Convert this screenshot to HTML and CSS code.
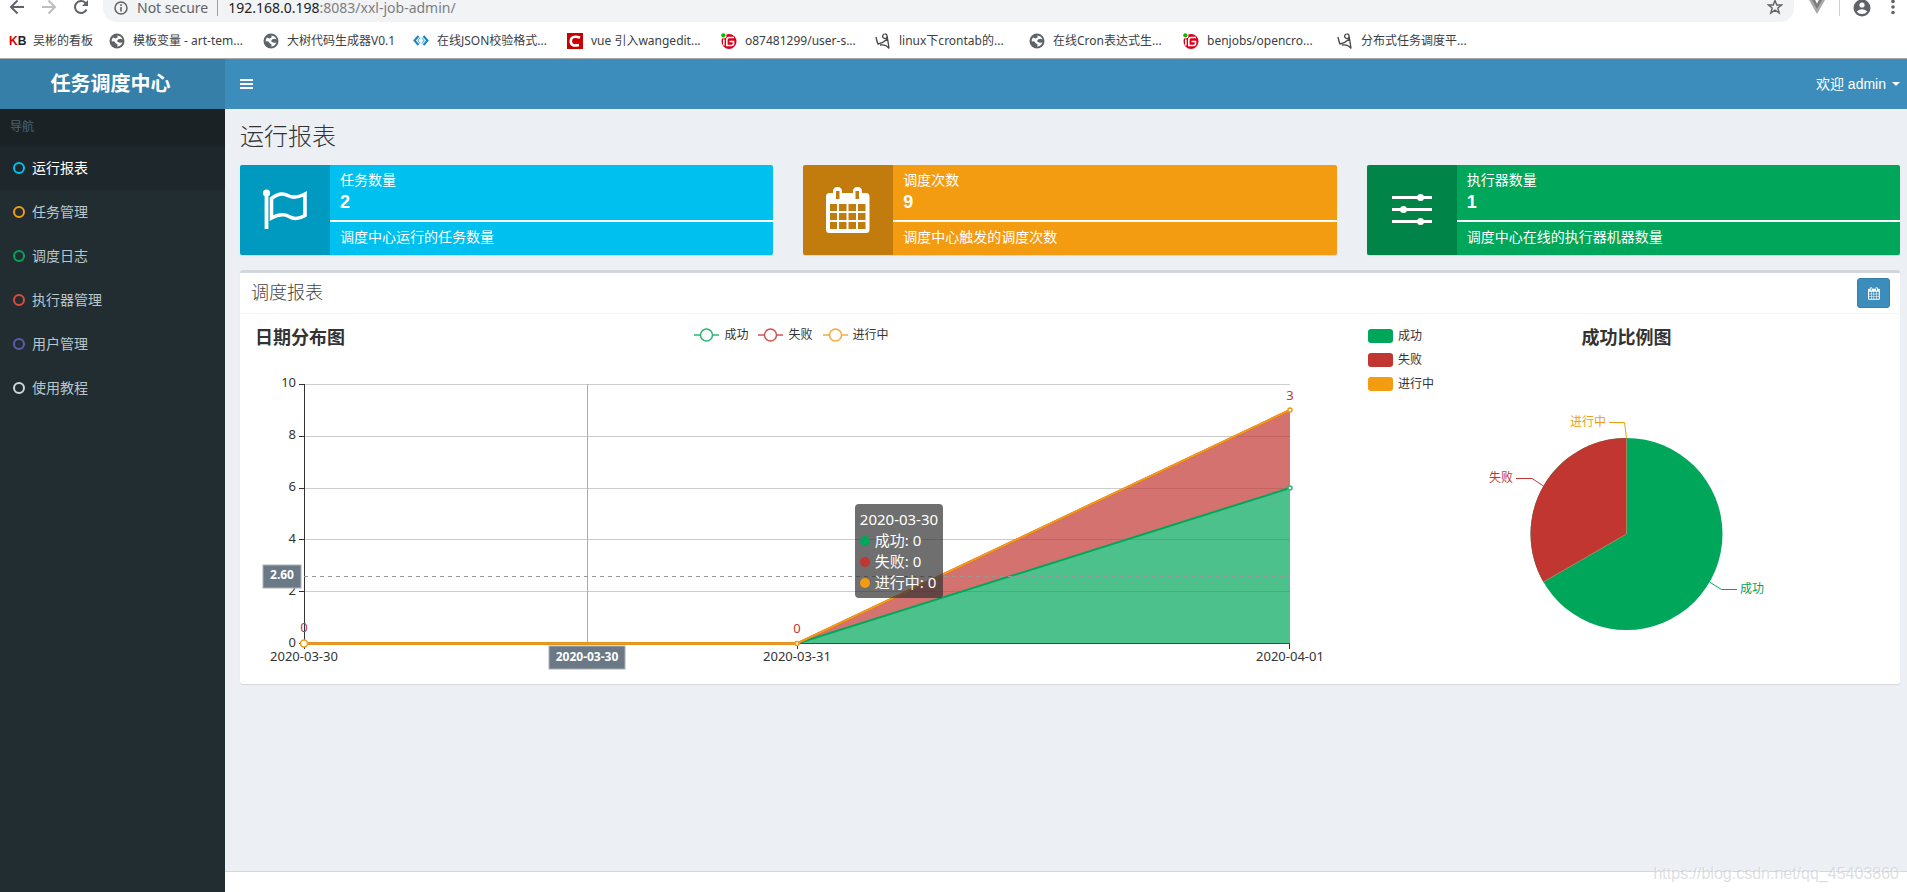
FILE: index.html
```html
<!DOCTYPE html>
<html lang="zh-CN">
<head>
<meta charset="utf-8">
<title>任务调度中心</title>
<link rel="stylesheet" href="styles.css">
</head>
<body class="page">
<svg class="defs" width="0" height="0" aria-hidden="true">
  <symbol id="globe" viewBox="0 0 16 16">
    <circle cx="8" cy="8" r="7.500" fill="#5f6368"/>
    <path d="M8.500 2.500Q12.500 3 13.500 6.500L11.500 5.800 9 6.500 8 8.200 10 9.500H13.300Q12 13.500 8 13.600L8.800 11.800 6.500 10 5.500 8.500 2.600 8.200Q2.500 6 4 4.500L6.500 5.500 8.500 4.500Z" fill="#fff"/>
    <path d="M9 7.500 12 7 13.500 8.500 12 9.500 10 9Z" fill="#5f6368"/>
  </symbol>
  <symbol id="gitee" viewBox="0 0 16 16">
    <circle cx="8" cy="8.500" r="7.500" fill="#d9001b"/>
    <circle cx="2.500" cy="2.500" r="3" fill="#fff"/>
    <circle cx="2.300" cy="2.300" r="2.100" fill="#0ab80a"/>
    <path d="M13 4.500H8Q5.800 4.500 5.800 7V12.500H10.500Q12.500 12.500 12.500 10.500V8.500H8.500M2.800 6.500V12.500" fill="none" stroke="#fff" stroke-width="1.600"/>
  </symbol>
  <symbol id="quill" viewBox="0 0 16 16">
    <path d="M1 4Q2 9 3 11Q8 10 12.500 6M9 1Q6.500 3 8.500 5Q11 6.500 12 4Q12.500 1 9.500 .800M12 2.500Q13 8 14 15.500Q11 11 5 12" fill="none" stroke="#444" stroke-width="1.300"/>
  </symbol>
  <symbol id="calendar" viewBox="0 0 44 46">
    <path fill-rule="evenodd" d="M3.500 6H7V4.500Q7 0 11.500 0T16 4.500V6H27V4.500Q27 0 31.500 0T36 4.500V6H40Q43.500 6 43.500 9.500V42.500Q43.500 46 40 46H3.500Q0 46 0 42.500V9.500Q0 6 3.500 6ZM10 4V12H13.500V4ZM29.500 4V12H33V4ZM4 17V24H11V17ZM13 17V24H20.500V17ZM22.500 17V24H30V17ZM32 17V24H39.500V17ZM4 26V33H11V26ZM13 26V33H20.500V26ZM22.500 26V33H30V26ZM32 26V33H39.500V26ZM4 35V42H11V35ZM13 35V42H20.500V35ZM22.500 35V42H30V35ZM32 35V42H39.500V35Z" fill="#fff"/>
  </symbol>
</svg>

<div class="toolbar">
  <button class="tool" aria-label="后退"><svg width="16" height="16" viewBox="0 0 16 16" fill="none" stroke="#5f6368" stroke-width="2"><path d="M15 8H2M8.500 1.500 2 8l6.500 6.500"/></svg></button>
  <button class="tool" aria-label="前进"><svg width="16" height="16" viewBox="0 0 16 16" fill="none" stroke="#bcbec1" stroke-width="2"><path d="M1 8H14M7.500 1.500 14 8l-6.500 6.500"/></svg></button>
  <button class="tool" aria-label="刷新"><svg width="16" height="16" viewBox="0 0 16 16"><path d="M13.500 10.500A6 6 0 1 1 12.300 3.800L14 5.500" fill="none" stroke="#5f6368" stroke-width="2"/><path d="M15 1V7H9Z" fill="#5f6368"/></svg></button>
  <div class="address">
    <svg width="14" height="14" viewBox="0 0 14 14"><circle cx="7" cy="7" r="6" fill="none" stroke="#5f6368" stroke-width="1.500"/><path d="M7 6V10.500M7 3.300V5" stroke="#5f6368" stroke-width="1.600"/></svg>
    <span class="address-note">Not secure</span>
    <span class="address-url"><b class="address-host">192.168.0.198</b>:8083/xxl-job-admin/</span>
    <button class="tool" aria-label="收藏"><svg width="16" height="16" viewBox="0 0 16 16"><path d="M8 1.500 9.800 6H14.500L10.800 9 12.200 14 8 11.200 3.800 14 5.200 9 1.500 6H6.200Z" fill="none" stroke="#5f6368" stroke-width="1.400"/></svg></button>
  </div>
  <div class="tools-right">
    <button class="tool" aria-label="扩展"><svg width="16" height="16" viewBox="0 0 16 16"><path d="M0 1H6L8 5 10 1H16L8 15Z" fill="#a8a8a8"/><path d="M3 1H6L8 5 10 1H13L8 10Z" fill="#7c7c7c"/></svg></button>
    <span class="tools-split"></span>
    <button class="tool" aria-label="用户"><svg width="18" height="18" viewBox="0 0 18 18"><circle cx="9" cy="9" r="8.500" fill="#5f6368"/><circle cx="9" cy="6" r="2.600" fill="#fff"/><path d="M3.800 12.500Q9 8 14.200 12.500 12.500 15 9 15T3.800 12.500Z" fill="#fff"/></svg></button>
    <button class="tool" aria-label="菜单"><svg width="16" height="16" viewBox="0 0 16 16" fill="#5f6368"><circle cx="8" cy="2.500" r="1.800"/><circle cx="8" cy="8" r="1.800"/><circle cx="8" cy="13.500" r="1.800"/></svg></button>
  </div>
</div>

<nav class="bookmarks">
  <a class="bookmark bookmark--short" href="#"><span class="kb"><b class="kb-k">K</b>B</span>吴彬的看板</a>
  <a class="bookmark" href="#"><svg width="16" height="16"><use href="#globe"/></svg>模板变量 - art-tem...</a>
  <a class="bookmark bookmark--medium" href="#"><svg width="16" height="16"><use href="#globe"/></svg>大树代码生成器V0.1</a>
  <a class="bookmark" href="#"><svg width="16" height="16" viewBox="0 0 16 16" fill="none" stroke="#1583c4" stroke-width="2"><path d="M5.500 3 1.500 7.500 5.500 12M10.500 3 14.500 7.500 10.500 12"/><path d="M7.300 4.500 5 7.500 7.300 10.500M8.700 4.500 11 7.500 8.700 10.500" stroke="#58b4e6" stroke-width="1.200"/></svg>在线JSON校验格式...</a>
  <a class="bookmark" href="#"><svg width="16" height="16" viewBox="0 0 16 16"><path d="M0 0H16V16H0Z" fill="#c80000"/><path d="M13 4.500Q4 2 3.800 8T12 12" fill="none" stroke="#fff" stroke-width="2.600"/></svg>vue 引入wangedit...</a>
  <a class="bookmark" href="#"><svg width="16" height="16"><use href="#gitee"/></svg>o87481299/user-s...</a>
  <a class="bookmark" href="#"><svg width="16" height="16"><use href="#quill"/></svg>linux下crontab的...</a>
  <a class="bookmark" href="#"><svg width="16" height="16"><use href="#globe"/></svg>在线Cron表达式生...</a>
  <a class="bookmark" href="#"><svg width="16" height="16"><use href="#gitee"/></svg>benjobs/opencro...</a>
  <a class="bookmark" href="#"><svg width="16" height="16"><use href="#quill"/></svg>分布式任务调度平...</a>
</nav>

<header class="header">
  <a class="logo" href="#">任务调度中心</a>
  <div class="navbar">
    <button class="toggle" aria-label="切换导航"><svg width="14" height="10" viewBox="0 0 14 10"><path d="M0 1H13M0 5H13M0 9H13" stroke="#fff" stroke-width="2"/></svg></button>
    <button class="user">欢迎 admin<span class="caret"></span></button>
  </div>
</header>

<div class="shell">
  <aside class="sidebar">
    <div class="sidebar-title">导航</div>
    <a class="side-link side-link--active" href="#"><span class="ring ring--aqua"></span>运行报表</a>
    <a class="side-link" href="#"><span class="ring ring--yellow"></span>任务管理</a>
    <a class="side-link" href="#"><span class="ring ring--green"></span>调度日志</a>
    <a class="side-link" href="#"><span class="ring ring--red"></span>执行器管理</a>
    <a class="side-link" href="#"><span class="ring ring--purple"></span>用户管理</a>
    <a class="side-link" href="#"><span class="ring ring--gray"></span>使用教程</a>
  </aside>

  <div class="main">
    <main class="content">
      <h1 class="page-title">运行报表</h1>

      <section class="cards">
        <div class="card card--aqua">
          <div class="card-icon"><svg width="46" height="42" viewBox="0 0 46 42" fill="none" stroke="#fff" stroke-width="3.600"><circle cx="4.500" cy="4" r="3.600" fill="#fff" stroke="none"/><path d="M4.500 5V40" stroke-width="3.800"/><path d="M9.500 9.500C17 4 21 4 27 7Q33 10 43 5V26.500Q34 32 27 27.500Q20 23.500 9.500 29Z"/></svg></div>
          <div class="card-body"><div class="card-name">任务数量</div><div class="card-number">2</div><div class="card-line"></div><div class="card-note">调度中心运行的任务数量</div></div>
        </div>
        <div class="card card--yellow">
          <div class="card-icon"><svg width="44" height="46"><use href="#calendar"/></svg></div>
          <div class="card-body"><div class="card-name">调度次数</div><div class="card-number">9</div><div class="card-line"></div><div class="card-note">调度中心触发的调度次数</div></div>
        </div>
        <div class="card card--green">
          <div class="card-icon"><svg width="40" height="32" viewBox="0 0 40 32"><path d="M0 3.500H40M0 15.500H40M0 27.500H40" stroke="#fff" stroke-width="3"/><g fill="#fff"><circle cx="28.500" cy="3.500" r="3.500"/><circle cx="11.500" cy="15.500" r="3.500"/><circle cx="28.500" cy="27.500" r="3.500"/></g></svg></div>
          <div class="card-body"><div class="card-name">执行器数量</div><div class="card-number">1</div><div class="card-line"></div><div class="card-note">调度中心在线的执行器机器数量</div></div>
        </div>
      </section>

      <section class="box">
        <div class="box-header">
          <h2 class="box-title">调度报表</h2>
          <button class="date-button" aria-label="选择日期"><svg width="12" height="13"><use href="#calendar"/></svg></button>
        </div>
        <div class="box-body">
          <div class="line-chart">
            <div class="line-head">
              <h3 class="chart-title">日期分布图</h3>
              <div class="line-legend">
                <span class="legend-item legend-item--green"><svg width="25" height="14" viewBox="0 0 25 14"><path d="M0 7H25"/><circle cx="12.500" cy="7" r="6"/></svg>成功</span>
                <span class="legend-item legend-item--red"><svg width="25" height="14" viewBox="0 0 25 14"><path d="M0 7H25"/><circle cx="12.500" cy="7" r="6"/></svg>失败</span>
                <span class="legend-item legend-item--yellow"><svg width="25" height="14" viewBox="0 0 25 14"><path d="M0 7H25"/><circle cx="12.500" cy="7" r="6"/></svg>进行中</span>
              </div>
            </div>
            <svg class="plot" viewBox="0 0 1083 300">
              <path class="grid-line" d="M54 10.500H1040M54 62.500H1040M54 114.500H1040M54 165.500H1040M54 217.500H1040"/>
              <path class="axis" d="M54.500 10V275M49 10.500H54M49 62.500H54M49 114.500H54M49 165.500H54M49 217.500H54M49 269.500H1040M547.500 269V275M1039.500 269V275"/>
              <path class="area-green" d="M547 269.500 1040 114V269.500Z"/>
              <path class="area-red" d="M547 269.500 1040 36V114Z"/>
              <path class="pointer" d="M337.500 10V270"/>
              <path class="line-green" d="M54 269.500H547L1040 114"/>
              <path class="line-red" d="M54 269.500H547L1040 36"/>
              <path class="line-base" d="M54 269.500H547"/>
              <path class="line-yellow" d="M54 269.500H547L1040 36"/>
              <path class="pointer pointer--dashed" d="M54 202.500H1040"/>
              <g class="dots"><circle cx="54" cy="269.500" r="3.500"/><circle cx="547" cy="269.500" r="2"/><circle cx="1040" cy="36" r="2"/><circle class="dot-green" cx="1040" cy="114" r="2"/></g>
              <g class="tick tick--y"><text x="46" y="13">10</text><text x="46" y="65">8</text><text x="46" y="117">6</text><text x="46" y="169">4</text><text x="46" y="221">2</text><text x="46" y="273">0</text></g>
              <g class="tick"><text x="54" y="287">2020-03-30</text><text x="547" y="287">2020-03-31</text><text x="1040" y="287">2020-04-01</text></g>
              <g class="tick tick--value"><text x="54" y="258">0</text><text x="547" y="259">0</text><text x="1040" y="26">3</text></g>
              <g class="flag"><rect x="13" y="191" width="38" height="23"/><rect x="299" y="272" width="76" height="23"/><text x="32" y="205">2.60</text><text x="337" y="287">2020-03-30</text></g>
            </svg>
            <div class="tooltip">
              <div>2020-03-30</div>
              <div><span class="dot dot--green"></span>成功: 0</div>
              <div><span class="dot dot--red"></span>失败: 0</div>
              <div><span class="dot dot--yellow"></span>进行中: 0</div>
            </div>
          </div>

          <div class="pie-chart">
            <div class="pie-head">
              <div class="pie-legend">
                <span class="legend-item"><span class="swatch swatch--green"></span>成功</span>
                <span class="legend-item"><span class="swatch swatch--red"></span>失败</span>
                <span class="legend-item"><span class="swatch swatch--yellow"></span>进行中</span>
              </div>
              <h3 class="chart-title">成功比例图</h3>
            </div>
            <svg class="pie" viewBox="0 0 527 275">
              <circle cx="263.500" cy="135" r="96" fill="#00a65a"/>
              <path d="M263.500 135V39A96 96 0 0 0 180.400 183Z" fill="#c23632"/>
              <path d="M263.500 39V135L180.400 183" fill="none" stroke="#a08a60" stroke-width="1"/>
              <g fill="none"><path d="M263.500 39 261.500 23.500H246" stroke="#f39c12"/><path d="M180.500 87 169 79.500H153" stroke="#c23632"/><path d="M346.500 183 358.500 190.500H374" stroke="#00a65a"/></g>
              <g class="pie-label"><text x="243" y="27" text-anchor="end" fill="#f39c12">进行中</text><text x="150" y="83" text-anchor="end" fill="#c23632">失败</text><text x="377" y="194" fill="#00a65a">成功</text></g>
            </svg>
          </div>
        </div>
      </section>
    </main>
    <footer class="footer"></footer>
  </div>
</div>
<div class="watermark">https://blog.csdn.net/qq_45403860</div>
</body>
</html>
```

FILE: styles.css
```css
* { box-sizing: border-box; }

.page {
  margin: 0;
  min-height: 100vh;
  display: flex;
  flex-direction: column;
  position: relative;
  background: #fff;
  color: #333;
  font: 14px/20px "Liberation Sans", "Noto Sans CJK SC", sans-serif;
}

.defs { position: absolute; }
a { color: inherit; text-decoration: none; }
h1, h2, h3 { margin: 0; }
button { padding: 0; border: 0; background: none; color: inherit; font: inherit; }
svg { display: block; flex: none; }

/* Browser bar */
.toolbar {
  display: flex;
  align-items: center;
  height: 22px;
  padding-left: 8px;
  gap: 14px;
  font: 14px/16px "Noto Sans", sans-serif;
}
.tool { display: flex; width: 18px; height: 18px; margin-bottom: 6px; justify-content: center; }
.address {
  flex: 1;
  display: flex;
  align-items: center;
  height: 22px;
  margin-left: -1px;
  padding: 0 10px 6px 11px;
  border-radius: 0 0 14px 14px;
  background: #f1f3f4;
}
.address .tool { margin: 0 0 0 auto; }
.address-note { margin-left: 9px; padding-right: 9px; border-right: 1px solid #9a9da1; color: #5f6368; }
.address-url { margin-left: 10px; color: #7b7f83; }
.address-host { font-weight: 400; color: #202124; }
.tools-right { display: flex; align-items: center; gap: 13px; padding-right: 5px; }
.tools-split { width: 1px; height: 16px; margin-bottom: 6px; background: #d0d2d5; }

.bookmarks {
  display: flex;
  gap: 16px;
  height: 37px;
  padding: 1px 9px 0;
  align-items: center;
  border-bottom: 1px solid #a9a9a9;
  font: 12px/16px "Noto Sans", "Noto Sans CJK SC", sans-serif;
  color: #3c4043;
}
.bookmark { display: flex; align-items: center; gap: 8px; width: 138px; white-space: nowrap; }
.bookmark--short { width: 84px; }
.bookmark--medium { width: 134px; }
.kb { width: 16px; font: bold 12px/16px "Liberation Sans", sans-serif; color: #222; }
.kb-k { color: #d00; }

/* Application header */
.header { display: flex; height: 50px; color: #fff; }
.logo {
  width: 225px;
  padding-right: 4px;
  background: #367fa9;
  text-align: center;
  font: bold 20px/50px "Liberation Serif", "Noto Sans CJK SC", serif;
}
.navbar { flex: 1; display: flex; justify-content: space-between; align-items: center; padding: 0 7px 0 15px; background: #3c8dbc; }
.user { display: flex; align-items: center; gap: 6px; }
.caret { border: 4px solid transparent; border-top-color: #fff; border-bottom: 0; }

.shell { flex: 1; display: flex; }

.sidebar { width: 225px; background: #222d32; color: #b8c7ce; }
.sidebar-title { padding: 8px 10px 9px; background: #1a2226; color: #4b646f; font-size: 12px; }
.side-link { display: flex; align-items: center; gap: 7px; height: 44px; padding-left: 13px; }
.side-link--active { background: #1e282c; color: #fff; }
.ring { width: 12px; height: 12px; border: 2px solid; border-radius: 50%; }
.ring--aqua { border-color: #00c0ef; }
.ring--yellow { border-color: #f39c12; }
.ring--green { border-color: #00a65a; }
.ring--red { border-color: #dd4b39; }
.ring--purple { border-color: #605ca8; }
.ring--gray { border-color: #d2d6de; }

.main { flex: 1; min-width: 0; display: flex; flex-direction: column; }
.content { flex: 1; padding: 16px 7px 15px 15px; background: #ecf0f5; }
.footer { height: 21px; border-top: 1px solid #d2d6de; background: #fff; }

.page-title { margin-bottom: 16px; font-size: 24px; line-height: 24px; font-weight: 300; }

/* Summary cards */
.cards { display: grid; grid-template-columns: repeat(3, 1fr); gap: 30px; margin-bottom: 15px; }
.card { display: flex; height: 90px; border-radius: 2px; overflow: hidden; color: #fff; box-shadow: 0 1px 1px rgba(0, 0, 0, .1); }
.card--aqua { background: #00c0ef; }
.card--yellow { background: #f39c12; }
.card--green { background: #00a65a; }
.card-icon { width: 90px; display: flex; align-items: center; justify-content: center; background: rgba(0, 0, 0, .2); }
.card-body { flex: 1; padding-top: 5px; }
.card-name { padding: 0 10px; }
.card-number { padding: 0 10px; font-size: 18px; line-height: 24px; font-weight: 700; }
.card-line { height: 2px; margin: 6px 0 5px; background: #fff; }
.card-note { padding: 0 10px; }

/* Report box */
.box { border-top: 3px solid #d2d6de; border-radius: 3px; background: #fff; box-shadow: 0 1px 1px rgba(0, 0, 0, .1); }
.box-header { display: flex; justify-content: space-between; align-items: flex-start; height: 41px; padding: 5px 10px; border-bottom: 1px solid #f4f4f4; }
.box-title { padding: 6px 0 0 1px; font-size: 18px; line-height: 18px; font-weight: 300; color: #444; }
.date-button { display: flex; align-items: center; justify-content: center; width: 33px; height: 30px; border: 1px solid #367fa9; border-radius: 3px; background: #3c8dbc; }
.box-body { display: grid; grid-template-columns: 1083fr 527fr; gap: 30px; padding: 10px; font-family: "Noto Sans", "Noto Sans CJK SC", sans-serif; }

.chart-title { padding-top: 1px; font-size: 18px; line-height: 24px; font-weight: 700; }
.legend-item { display: flex; align-items: center; gap: 5px; font-size: 12px; line-height: 14px; fill: #fff; stroke-width: 1.5; }
.legend-item--green { stroke: #2bb673; }
.legend-item--red { stroke: #cc5350; }
.legend-item--yellow { stroke: #f5ab38; }

.line-chart { position: relative; }
.line-head { display: grid; grid-template-columns: 1fr auto 1fr; height: 50px; }
.line-head .chart-title { padding-left: 5px; }
.line-legend { display: flex; gap: 10px; padding-top: 4px; height: 18px; }
.plot { width: 100%; height: auto; }
.grid-line { stroke: #ccc; }
.axis { stroke: #333; }
.area-green { fill: #00a65a; opacity: .7; }
.area-red { fill: #c23632; opacity: .7; }
.pointer { stroke: #aaa; }
.pointer--dashed { stroke: #999; stroke-dasharray: 4; }
.line-green, .line-red, .line-yellow, .line-base { fill: none; stroke-width: 2; }
.line-green { stroke: #00a65a; }
.line-red { stroke: #c23632; }
.line-yellow { stroke: #f39c12; }
.line-base { stroke: #cf8a2a; stroke-width: 3; }
.dots { fill: #fff; stroke: #f39c12; stroke-width: 1.5; }
.dot-green { stroke: #2bb673; }
.tick { font-size: 13px; fill: #333; text-anchor: middle; }
.tick--y { text-anchor: end; }
.tick--value { fill: #c23632; }
.flag { font-size: 12px; font-weight: 700; text-anchor: middle; fill: #fff; }
.flag rect { fill: #6a7985; stroke: #a9b1b8; }

.tooltip {
  position: absolute;
  top: 180px;
  right: 36%;
  min-width: 88px;
  padding: 5px;
  border-radius: 4px;
  background: rgba(50, 50, 50, .7);
  color: #fff;
  font-size: 15px;
  line-height: 21px;
  white-space: nowrap;
}
.dot { display: inline-block; width: 10px; height: 10px; margin-right: 5px; border-radius: 50%; }
.dot--green, .swatch--green { background: #00a65a; }
.dot--red, .swatch--red { background: #c23632; }
.dot--yellow, .swatch--yellow { background: #f39c12; }

.pie-head { display: grid; grid-template-columns: 1fr auto 1fr; height: 75px; padding-left: 5px; padding-right: 5px; }
.pie-legend { display: flex; flex-direction: column; gap: 10px; padding-top: 5px; }
.swatch { width: 25px; height: 14px; border-radius: 3px; }
.pie { width: 100%; height: auto; }
.pie-label { font-size: 12px; }

.watermark {
  position: absolute;
  right: 8px;
  bottom: 8px;
  font-size: 16px;
  line-height: 20px;
  color: rgba(200, 200, 205, .6);
  text-shadow: 1px 1px 1px #fff;
}
```
